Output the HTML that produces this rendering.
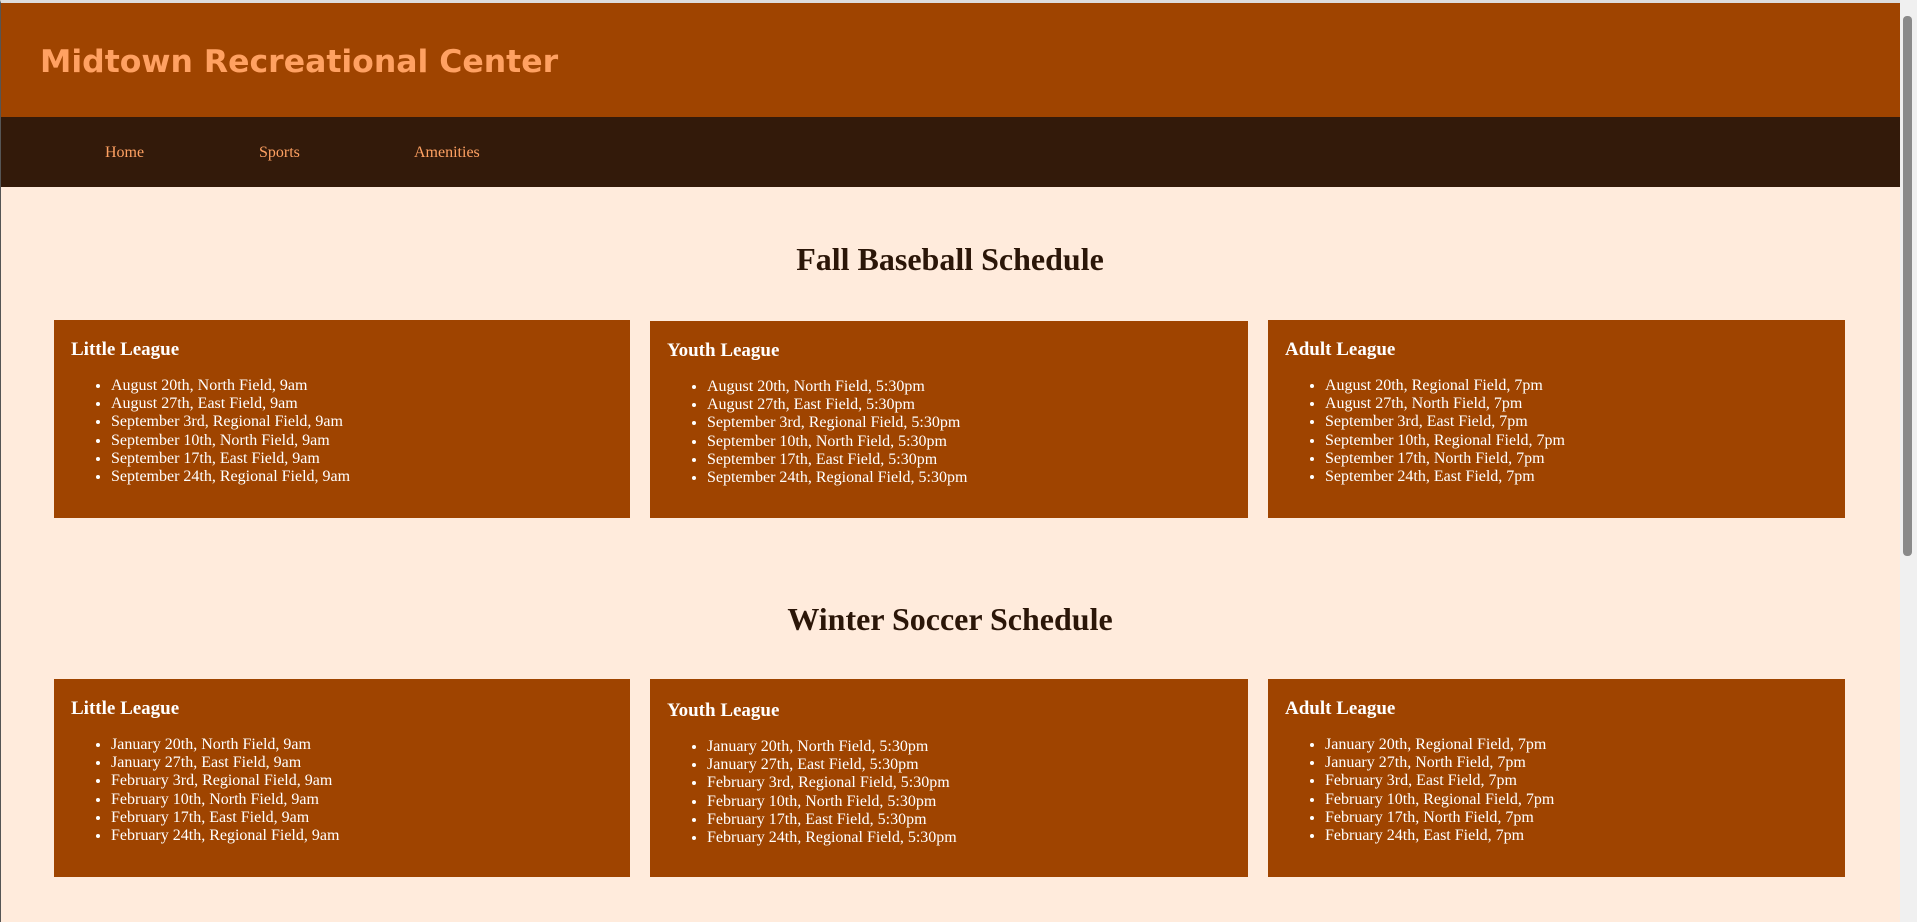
<!DOCTYPE html>
<html><head><meta charset="utf-8"><style>
*{margin:0;padding:0;box-sizing:border-box}
html,body{width:1917px;height:922px;overflow:hidden;background:#ffebdc;font-family:"Liberation Serif",serif}
.frame{position:absolute;left:0;top:0;width:1900px;height:922px;background:#ffebdc;border-left:1px solid #555;border-top:3px solid #ddd}
.hdr{position:absolute;left:1px;top:3px;width:1899px;height:114px;background:#9f4400}
.hdr h1{position:absolute;left:39px;top:40px;font-family:"DejaVu Sans",sans-serif;font-weight:bold;font-size:31.5px;color:#ffa162;white-space:nowrap;line-height:38px}
.nav{position:absolute;left:1px;top:117px;width:1899px;height:70px;background:#331a0a}
.nav a{position:absolute;top:27px;font-size:16px;color:#ffa162;text-decoration:none;line-height:18px}
h2{position:absolute;left:0;width:1900px;text-align:center;font-size:32px;font-weight:bold;color:#2b1608;line-height:36px}
.card{position:absolute;background:#9f4400;color:#fff;padding:18px 17px}
.card h3{font-size:19px;font-weight:bold;line-height:22px;margin-top:1px}
.card ul{padding-left:40px;margin-top:16px;font-size:16px;line-height:18.2px}
.sb{position:absolute;left:1900px;top:0;width:17px;height:922px;background:#f0f0f0}
.sb .th{position:absolute;left:3px;top:16px;width:9px;height:540px;background:#8a8a8a;border-radius:4px}
</style></head><body>
<div class="frame"></div>
<div class="hdr"><h1>Midtown Recreational Center</h1></div>
<div class="nav"><a style="left:104px">Home</a><a style="left:258px">Sports</a><a style="left:413px">Amenities</a></div>
<h2 style="top:241px">Fall Baseball Schedule</h2>
<div class="card" style="left:54px;top:320px;width:576px;height:198px"><h3>Little League</h3><ul>
<li>August 20th, North Field, 9am</li><li>August 27th, East Field, 9am</li><li>September 3rd, Regional Field, 9am</li><li>September 10th, North Field, 9am</li><li>September 17th, East Field, 9am</li><li>September 24th, Regional Field, 9am</li></ul></div>
<div class="card" style="left:650px;top:321px;width:598px;height:197px"><h3>Youth League</h3><ul>
<li>August 20th, North Field, 5:30pm</li><li>August 27th, East Field, 5:30pm</li><li>September 3rd, Regional Field, 5:30pm</li><li>September 10th, North Field, 5:30pm</li><li>September 17th, East Field, 5:30pm</li><li>September 24th, Regional Field, 5:30pm</li></ul></div>
<div class="card" style="left:1268px;top:320px;width:577px;height:198px"><h3>Adult League</h3><ul>
<li>August 20th, Regional Field, 7pm</li><li>August 27th, North Field, 7pm</li><li>September 3rd, East Field, 7pm</li><li>September 10th, Regional Field, 7pm</li><li>September 17th, North Field, 7pm</li><li>September 24th, East Field, 7pm</li></ul></div>
<h2 style="top:601px">Winter Soccer Schedule</h2>
<div class="card" style="left:54px;top:679px;width:576px;height:198px"><h3>Little League</h3><ul>
<li>January 20th, North Field, 9am</li><li>January 27th, East Field, 9am</li><li>February 3rd, Regional Field, 9am</li><li>February 10th, North Field, 9am</li><li>February 17th, East Field, 9am</li><li>February 24th, Regional Field, 9am</li></ul></div>
<div class="card" style="left:650px;top:679px;width:598px;height:198px"><h3 style="margin-top:3px">Youth League</h3><ul>
<li>January 20th, North Field, 5:30pm</li><li>January 27th, East Field, 5:30pm</li><li>February 3rd, Regional Field, 5:30pm</li><li>February 10th, North Field, 5:30pm</li><li>February 17th, East Field, 5:30pm</li><li>February 24th, Regional Field, 5:30pm</li></ul></div>
<div class="card" style="left:1268px;top:679px;width:577px;height:198px"><h3>Adult League</h3><ul>
<li>January 20th, Regional Field, 7pm</li><li>January 27th, North Field, 7pm</li><li>February 3rd, East Field, 7pm</li><li>February 10th, Regional Field, 7pm</li><li>February 17th, North Field, 7pm</li><li>February 24th, East Field, 7pm</li></ul></div>
<div class="sb"><div class="th"></div></div>
</body></html>
